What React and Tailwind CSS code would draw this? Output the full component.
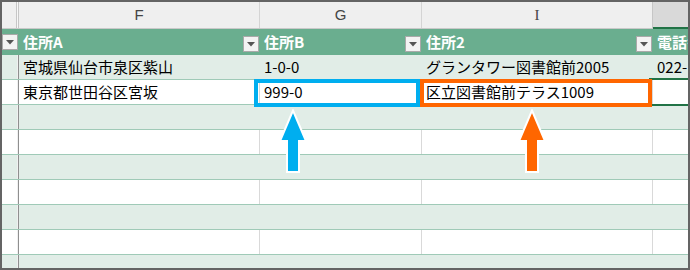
import React from "react";

const FONT = { fontFamily: '"Noto Sans CJK JP", "Noto Sans", sans-serif' };

const COLS = [
  { key: "E", w: "w-[15px]", letter: "" },
  { key: "F", w: "w-[241px]", letter: "F" },
  { key: "G", w: "w-[162px]", letter: "G" },
  { key: "I", w: "w-[231px]", letter: "I" },
  { key: "J", w: "flex-1", letter: "" },
];

const HEAD = ["", "住所A", "住所B", "住所2", "電話番号"];

const ROWS = [
  ["", "宮城県仙台市泉区紫山", "1-0-0", "グランタワー図書館前2005", "022-123-4567"],
  ["", "東京都世田谷区宮坂", "999-0", "区立図書館前テラス1009", ""],
  ["", "", "", "", ""],
  ["", "", "", "", ""],
  ["", "", "", "", ""],
  ["", "", "", "", ""],
  ["", "", "", "", ""],
  ["", "", "", "", ""],
  ["", "", "", "", ""],
];

function FilterButton() {
  return (
    <div className="w-[16px] h-[16px] shrink-0 bg-[#f3f3f3] border border-[#a9a9a9] flex items-center justify-center">
      <svg width="8" height="5" viewBox="0 0 8 5">
        <path d="M0 0 L8 0 L4 4.5 Z" fill="#555" />
      </svg>
    </div>
  );
}

function Arrow({ color }) {
  return (
    <svg width="30" height="66" viewBox="0 0 30 66">
      <path
        d="M15 1.5 L28 32 L21 32 L21 63 L9 63 L9 32 L2 32 Z"
        fill={color}
        stroke="#fff"
        strokeWidth="2"
        strokeLinejoin="miter"
      />
    </svg>
  );
}

export default function App() {
  return (
    <div
      className="relative w-[690px] h-[270px] border-2 border-[#646464] bg-white overflow-hidden flex flex-col"
      style={FONT}
    >
      {/* column letters */}
      <div className="flex h-[27px] shrink-0 bg-[#efefef] border-b border-[#c9c9c9]">
        <div className="w-[15px] border-r border-[#c6c6c6]" />
        <div className="w-[1px] bg-[#f7f7f7]" />
        <div className="w-[1px] bg-[#c6c6c6]" />
        <div className="w-[241px] border-r border-[#d4d4d4] flex items-center justify-center text-[15px] text-[#444] [font-family:'Liberation_Sans',sans-serif]">
          F
        </div>
        <div className="w-[162px] border-r border-[#d4d4d4] flex items-center justify-center text-[15px] text-[#444] [font-family:'Liberation_Sans',sans-serif]">
          G
        </div>
        <div className="w-[231px] border-r border-[#c6c6c6] flex items-center justify-center text-[15px] text-[#444] [font-family:'Liberation_Serif',serif]">
          I
        </div>
        <div className="flex-1 bg-[#d9d9d9] border-b-2 border-[#217346] -mb-[1px]" />
      </div>

      {/* table header */}
      <div className="flex h-[26px] shrink-0 bg-[#6aae8f] text-white font-bold text-[15px]">
        <div className="w-[15px] flex items-start pt-[5px]">
          <FilterButton />
        </div>
        <div className="w-[2px] bg-[#8a8a8a] opacity-0" />
        {HEAD.slice(1).map((h, i) => (
          <div
            key={i}
            className={`${COLS[i + 1].w} flex items-start justify-between overflow-hidden ${i < 3 ? "pr-[1px]" : ""}`}
          >
            <span className="pl-[4px] pt-[2px] whitespace-nowrap leading-[22px]">{h}</span>
            {i < 3 && (
              <div className="pt-[7px]">
                <FilterButton />
              </div>
            )}
          </div>
        ))}
      </div>

      {/* data rows */}
      {ROWS.map((r, ri) => {
        const band = ri % 2 === 0;
        return (
          <div
            key={ri}
            className={`flex h-[25px] shrink-0 border-b border-[#9fcab7] text-[15px] text-black ${band ? "bg-[#e1ede7]" : "bg-white"}`}
          >
            <div className="w-[15px]" />
            <div className="w-[1px] bg-[#f0f0f0]" />
            <div className="w-[1px] bg-[#8f8f8f]" />
            {r.slice(1).map((c, ci) => (
              <div
                key={ci}
                className={`${COLS[ci + 1].w} flex items-center overflow-hidden ${ci < 3 ? "border-r" : ""} ${band ? "border-[#e1ede7]" : "border-[#d9d9d9]"}`}
              >
                <span className="pl-[4px] whitespace-nowrap">{c}</span>
              </div>
            ))}
          </div>
        );
      })}

      {/* active cell in column J */}
      <div className="absolute left-[647px] top-[76px] w-[60px] h-[28px] border-2 border-[#217346]" />

      {/* highlight boxes */}
      <div className="absolute left-[252px] top-[77px] w-[166px] h-[28px] border-4 border-[#00aeef]" />
      <div className="absolute left-[418px] top-[77px] w-[232px] h-[28px] border-4 border-[#ff6600]" />

      {/* arrows */}
      <div className="absolute left-[276px] top-[107px]">
        <Arrow color="#00aeef" />
      </div>
      <div className="absolute left-[515px] top-[107px]">
        <Arrow color="#ff6600" />
      </div>
    </div>
  );
}
